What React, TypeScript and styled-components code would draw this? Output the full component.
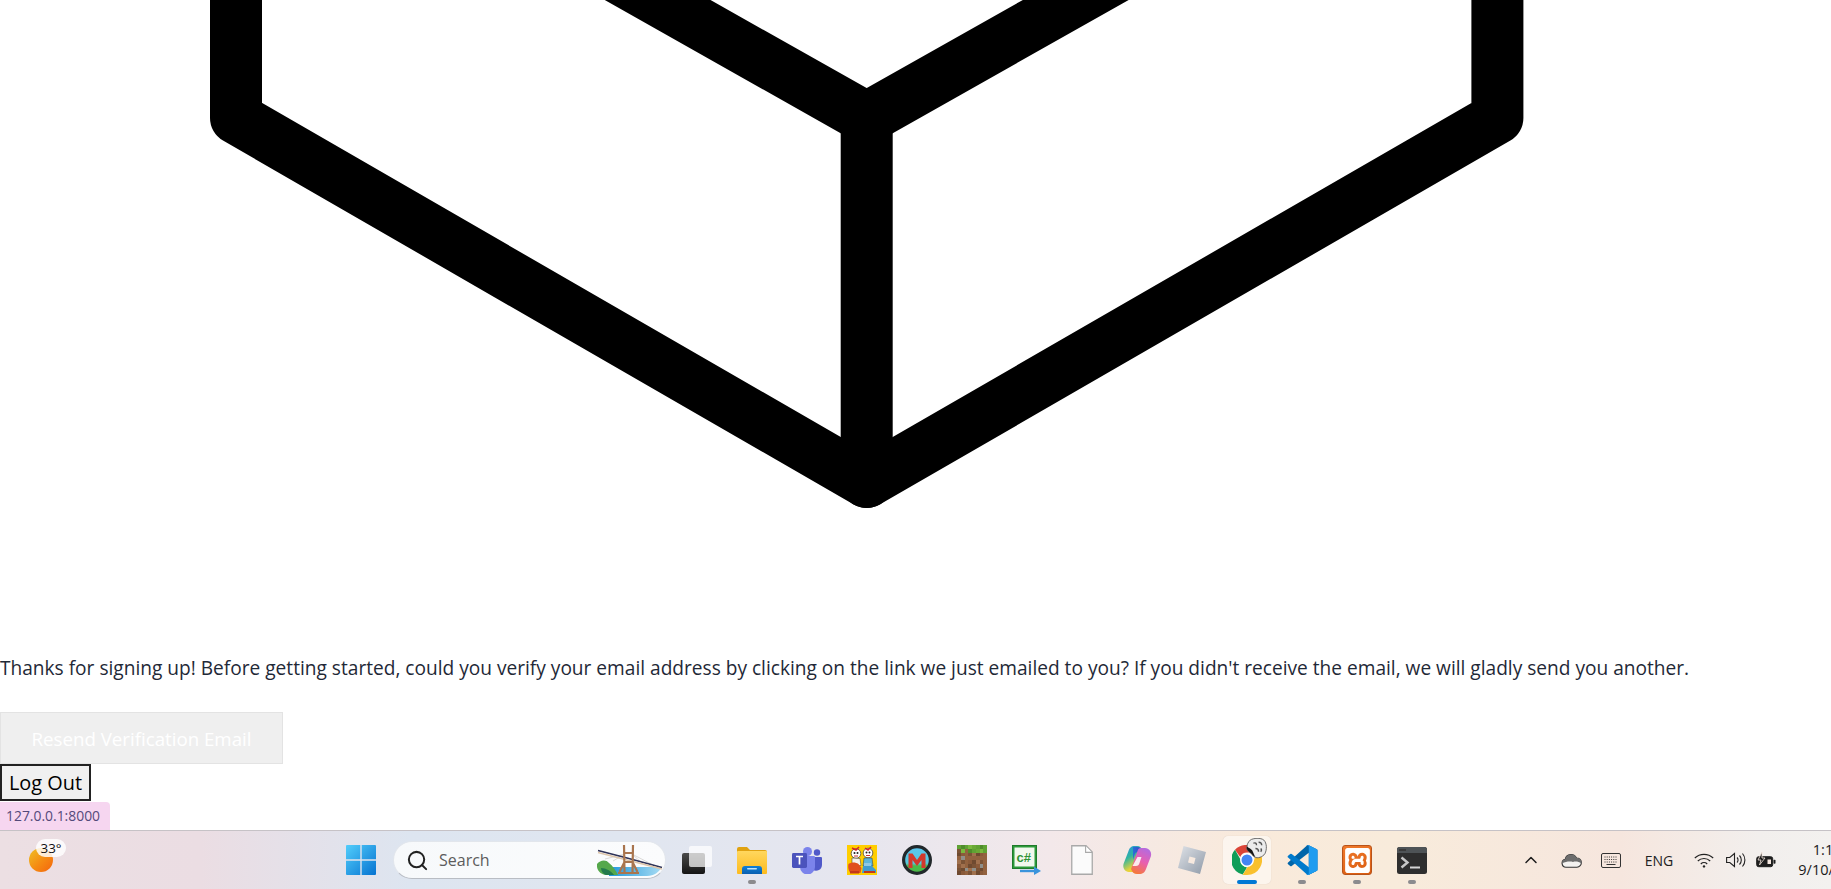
import React from "react";
import styled, { createGlobalStyle } from "styled-components";
import { Search, ChevronUp } from "lucide-react";
import { SiXampp } from "react-icons/si";

const UI = `"Open Sans", "Noto Sans", "Liberation Sans", sans-serif`;

const Global = createGlobalStyle`
  html, body { margin: 0; padding: 0; background: #fff; overflow: hidden; }
  * { box-sizing: border-box; }
`;

const Page = styled.div`
  width: 1831px; height: 889px; display: flex; flex-direction: column; overflow: hidden; font-family: ${UI};
`;
const CubeArt = styled.svg`display: block; width: 1831px; height: 648px; flex: none;`;
const Message = styled.p`
  margin: 0 0 24px; height: 40px; line-height: 40px; font-size: 19.12px; color: #1f2937; white-space: nowrap;
`;
const Actions = styled.div`display: flex; flex-direction: column; align-items: flex-start;`;
const ResendButton = styled.button`
  width: 283px; height: 52px; padding: 0; background: #efefef; border: 1px solid #e3e3e3; color: #fff;
  font: 18.7px ${UI};
`;
const LogoutButton = styled.button`
  width: 91px; height: 37px; padding: 0; background: #f0f0f0; border: 2.5px solid #222; color: #000;
  font: 19.9px ${UI}; border-radius: 0;
`;
const StatusBubble = styled.div`
  align-self: flex-start; margin-top: 1px; width: 110px; height: 28px; padding-left: 6px; line-height: 28px;
  background: #f6d6f0; border-top-right-radius: 4px; color: #54497a; font-size: 13.9px; white-space: nowrap;
`;
const Taskbar = styled.div`
  flex: none; height: 59px; display: flex; align-items: center; border-top: 1px solid #c6c2c6;
  background: linear-gradient(90deg, #ecdfe3 0, #ebdde3 200px, #dde5f0 410px, #e0e6f0 620px, #e6e6ef 850px,
    #f3e8ea 1050px, #f9eadb 1250px, #f8ebdb 1400px, #f6e6de 1620px, #f2efed 1760px, #f3f1ef 1831px);
`;
const LeftZone = styled.div`flex: none; width: 333px; padding-left: 29px; display: flex; align-items: center;`;
const Weather = styled.div`
  position: relative; width: 24px; height: 24px; border-radius: 50%; margin-top: 0;
  background: linear-gradient(135deg, #efc125 0%, #f58a12 55%, #f4640e 100%);
`;
const WeatherBadge = styled.span`
  position: absolute; left: 7px; top: -9px; width: 30px; height: 18px; border-radius: 9px; text-align: center;
  background: rgba(255,255,255,.82); font-size: 13.4px; line-height: 18px; color: #111;
`;
const Slot = styled.div`
  position: relative; flex: none; width: 55px; height: 58px; display: flex; align-items: center; justify-content: center;
`;
const ActiveHighlight = styled.div`
  width: 48px; height: 48px; border-radius: 5px; display: flex; align-items: center; justify-content: center;
  background: rgba(255,255,255,.5); box-shadow: 0 0 1px rgba(0,0,0,.16);
`;
const Dot = styled.i<{ $active?: boolean }>`
  position: absolute; top: 49px; left: 50%; transform: translateX(-50%); height: 4px; border-radius: 2px;
  width: ${p => (p.$active ? 20 : 8)}px; background: ${p => (p.$active ? "#0078d4" : "#8b8b8e")};
`;
const SearchBox = styled.div`
  flex: none; width: 273px; height: 38px; margin: 0 3.5px 0 5px; border-radius: 19px; overflow: hidden;
  display: flex; align-items: center; padding-left: 12px; color: #222;
  background: linear-gradient(90deg, #f7f9fb, #fbfcfd); border: 1px solid #e2e6ec; border-bottom-color: #b9bdc4;
`;
const SearchLabel = styled.span`margin-left: 10px; font-size: 16px; color: #5c5c5c;`;
const BridgeWrap = styled.div`margin-left: auto; display: flex; margin-right: 2px;`;
const Tray = styled.div`flex: none; margin-left: 71.5px; display: flex; align-items: center; height: 58px; color: #1c1c1c;`;
const TrayItem = styled.div<{ $w: number }>`
  flex: none; width: ${p => p.$w}px; display: flex; align-items: center; justify-content: center;
`;
const LangLabel = styled.span`font-size: 14px; color: #222;`;
const Clock = styled.div`
  flex: none; width: 86px; text-align: right; font-size: 14.5px; line-height: 20px; color: #1a1a1a; white-space: nowrap;
`;
const CursorBadge = styled.svg`position: absolute; left: 23px; top: 2px;`;
const ChromeWrap = styled.div`position: relative; width: 48px; height: 48px; display: flex; align-items: center; justify-content: center;`;
const XamppTile = styled.div`
  width: 30px; height: 30px; border-radius: 3px; display: flex; align-items: center; justify-content: center; color: #fff;
  background: linear-gradient(160deg, #f07a2c, #d95c10); border: 1.5px solid #b9531a;
`;

const WindowsLogo = () => (
  <svg width="30" height="30" viewBox="0 0 30 30">
    <defs>
      <linearGradient id="win" x1="0" y1="0" x2="1" y2="1">
        <stop offset="0" stopColor="#52cdfb" /><stop offset="1" stopColor="#0673d1" />
      </linearGradient>
    </defs>
    <path fill="url(#win)" d="M1 0h13.3v14.3H0V1a1 1 0 0 1 1-1zM15.7 0H29a1 1 0 0 1 1 1v13.3H15.7zM0 15.7h14.3V30H1a1 1 0 0 1-1-1zM15.7 15.7H30V29a1 1 0 0 1-1 1H15.7z" />
  </svg>
);

const Bridge = () => (
  <svg width="66" height="32" viewBox="0 0 66 32">
    <defs>
      <linearGradient id="wat" x1="0" y1="0" x2="1" y2="0">
        <stop offset="0" stopColor="#1f97dc" /><stop offset="1" stopColor="#a8dcf3" />
      </linearGradient>
    </defs>
    <path d="M12 23H65C62 28 57 32 50 32H12z" fill="url(#wat)" />
    <path d="M28 10L8 15M28 10L16 17M35 10L46 20M35 10L58 22" stroke="#cfcbc8" strokeWidth=".7" />
    <path d="M1 6.500L30 14 65 23.500" stroke="#2f3358" strokeWidth="1.800" fill="none" />
    <path d="M1 8.500L30 16 65 25" stroke="#ddc5aa" strokeWidth="1.600" fill="none" />
    <path d="M27 1l.5 27M36 1l-.5 27M27 9h9M27.500 18l-5 10M35.500 18l5 10M27 18h9" stroke="#a9754e" strokeWidth="2.200" fill="none" />
    <path d="M21 29h21" stroke="#a9754e" strokeWidth="1.800" />
    <path d="M0 20c3-4 9-5 12-1 4 3 7 8 9 12H9C4 31-1 26 0 20z" fill="#55a84c" />
    <path d="M4 24c5 0 10 3 13 7H9c-3-1-5-4-5-7z" fill="#237a4c" />
  </svg>
);

const TaskView = () => (
  <svg width="30" height="28" viewBox="0 0 30 28">
    <defs>
      <linearGradient id="tvd" x1="0" y1="0" x2="0" y2="1">
        <stop offset="0" stopColor="#4a4a4a" /><stop offset="1" stopColor="#141414" />
      </linearGradient>
    </defs>
    <rect x="0" y="7" width="23" height="21" rx="2" fill="url(#tvd)" />
    <rect x="7" y="0" width="23" height="21" rx="2" fill="#fff" fillOpacity=".72" />
  </svg>
);

const Explorer = () => (
  <svg width="30" height="27" viewBox="0 0 30 27">
    <defs>
      <linearGradient id="fld" x1="0" y1="0" x2="0" y2="1">
        <stop offset="0" stopColor="#ffd75e" /><stop offset="1" stopColor="#fdbb1e" />
      </linearGradient>
      <linearGradient id="fb" x1="0" y1="0" x2="0" y2="1">
        <stop offset="0" stopColor="#0f80d7" /><stop offset="1" stopColor="#0a5fb0" />
      </linearGradient>
    </defs>
    <path d="M0 2a2 2 0 0 1 2-2h8l3 3h15a2 2 0 0 1 2 2v4H0z" fill="#e0a210" />
    <rect y="4" width="30" height="23" rx="1" fill="url(#fld)" />
    <path d="M5 27v-5a3 3 0 0 1 3-3h14a3 3 0 0 1 3 3v5z" fill="url(#fb)" />
    <rect x="10" y="21" width="10" height="1.6" rx=".8" fill="#bfe3fb" />
  </svg>
);

const Teams = () => (
  <svg width="30" height="27" viewBox="0 0 30 27">
    <circle cx="25" cy="5.5" r="3.2" fill="#5059c9" />
    <path d="M20 10h9a1 1 0 0 1 1 1v7a6 6 0 0 1-9 5z" fill="#5059c9" />
    <circle cx="15.5" cy="4.5" r="4.5" fill="#7b83eb" />
    <path d="M8 9h14a1 1 0 0 1 1 1v10a7.5 7.5 0 0 1-15 0z" fill="#7b83eb" />
    <rect x="0" y="6" width="15" height="15" rx="1.4" fill="#4b53bc" />
    <path d="M4 9.5h7M7.5 9.5v8" stroke="#fff" strokeWidth="1.7" />
  </svg>
);

const Cuphead = () => (
  <svg width="30" height="30" viewBox="0 0 30 30">
    <rect width="30" height="30" fill="#ffce00" />
    <circle cx="9" cy="8.500" r="4.800" fill="#fff" stroke="#333" strokeWidth=".7" />
    <circle cx="21" cy="8" r="4.800" fill="#fff" stroke="#333" strokeWidth=".7" />
    <path d="M5 3l4 2 3-3M18 3l3 2 3-3" stroke="#d8232a" strokeWidth="1.500" fill="none" />
    <circle cx="7.500" cy="8" r="1" fill="#222" /><circle cx="10.500" cy="8" r="1" fill="#222" />
    <circle cx="19.500" cy="7.500" r="1" fill="#222" /><circle cx="22.500" cy="7.500" r="1" fill="#222" />
    <path d="M7 11h4M19 10.500h4" stroke="#c33" strokeWidth="1.100" />
    <path d="M5 13l8 .5 1 7-9 .5z" fill="#f4f4ee" stroke="#333" strokeWidth=".5" />
    <path d="M17 13l8 0 1 8H16z" fill="#5cb6dc" stroke="#333" strokeWidth=".5" />
    <path d="M1.500 19c3-2 7-2 10 0l3 4-1 5H5c-3 0-4.500-5-3.500-9z" fill="#e0501e" />
    <path d="M16 21h9l4 4v3H15z" fill="#3f9cd0" />
    <path d="M17 18h7v3h-7z" fill="#8ec9e6" />
    <path d="M3 26h9v2.500H3zM17 26h11v2H17z" fill="#c3371a" />
  </svg>
);

const MBadge = () => (
  <svg width="30" height="30" viewBox="0 0 30 30">
    <defs>
      <linearGradient id="mb" x1="0" y1="0" x2="0" y2="1">
        <stop offset="0" stopColor="#5bc7ef" /><stop offset=".62" stopColor="#58c7dc" /><stop offset=".72" stopColor="#4cb948" />
      </linearGradient>
    </defs>
    <circle cx="15" cy="15" r="13.4" fill="url(#mb)" stroke="#22282b" strokeWidth="3.2" />
    <path d="M6.5 23V8.5h4L15 15l4.5-6.5h4V23h-4v-8L15 21l-4.5-6v8z" fill="#d2392c" />
  </svg>
);

const DIRT = ["#8a5a3a", "#6f4a30", "#a0704d", "#7b5336", "#93623f"];
const GRASS = ["#5fa233", "#79b83e", "#4f8d2b", "#6aa936"];
const STONE = new Set(["1-3", "6-5", "4-6", "2-6"]);
const cellColor = (c: number, r: number) => {
  const n = (c * 7 + r * 13 + c * r) % 5;
  if (STONE.has(`${c}-${r}`)) return "#8f8f8a";
  if (r === 0) return GRASS[n % 4];
  if (r === 1) return (c + n) % 3 === 0 ? DIRT[n] : GRASS[n % 4];
  return DIRT[n];
};
const GrassBlock = () => (
  <svg width="30" height="30" viewBox="0 0 8 8" shapeRendering="crispEdges">
    {Array.from({ length: 64 }, (_, i) => {
      const c = i % 8, r = Math.floor(i / 8);
      return <rect key={i} x={c} y={r} width="1.02" height="1.02" fill={cellColor(c, r)} />;
    })}
  </svg>
);

const CSharpFile = () => (
  <svg width="30" height="30" viewBox="0 0 30 30">
    <rect x=".5" y=".5" width="24" height="23" fill="#2c9a3a" stroke="#1f7a2a" />
    <rect x="2.5" y="2.5" width="20" height="19" fill="#f2f8ee" />
    <text x="4.500" y="17" fontFamily="'Liberation Sans', sans-serif" fontSize="13" fontWeight="700" fill="#2e9336">c#</text>
    <path d="M8 26h16" stroke="#3a94dc" strokeWidth="2.400" />
    <path d="M22 21.500l7 4.500-7 4z" fill="#3a94dc" />
  </svg>
);

const BlankFile = () => (
  <svg width="22" height="30" viewBox="0 0 22 30">
    <path d="M.75.75H15L21.25 7v22.25H.75z" fill="#fbfbfb" stroke="#a9a9a9" strokeWidth="1.3" />
    <path d="M14.6 1v6.4h6.4" fill="#fff" stroke="#a9a9a9" strokeWidth="1.1" />
  </svg>
);

const Copilot = () => (
  <svg width="30" height="30" viewBox="0 0 30 30">
    <defs>
      <linearGradient id="cpa" x1="0" y1="0" x2="0.5" y2="1">
        <stop offset="0" stopColor="#2b8fe8" /><stop offset=".45" stopColor="#2fb4a0" /><stop offset=".85" stopColor="#e8d23a" />
      </linearGradient>
      <linearGradient id="cpb" x1="0.7" y1="0" x2="0.3" y2="1">
        <stop offset="0" stopColor="#b36be0" /><stop offset=".5" stopColor="#e85fb0" /><stop offset="1" stopColor="#f5793a" />
      </linearGradient>
      <linearGradient id="cpc" x1="0" y1="0" x2="1" y2="0">
        <stop offset="0" stopColor="#2b6fd8" /><stop offset="1" stopColor="#3a3fc0" />
      </linearGradient>
    </defs>
    <path d="M21 6c-1-3-3-5-6-5h-2C9 1 7.500 3 6.500 6L1.500 19C.5 23 3 27 7 27h4c2 0 3-1 3.500-3z" fill="url(#cpa)" />
    <path d="M11 2h4c3 0 5 2 6 5h-5c-2 0-3 1-3.500 3L11 15z" fill="url(#cpc)" />
    <path d="M9 24c1 3 3 5 6 5h2c4 0 6-2 7-5l5-13c1-4-2-8-6-8h-4c-2 0-3 1-3.500 3z" fill="url(#cpb)" />
    <path d="M15.500 12h4l-2 6c-.5 2-1.500 3-3.500 3h-3.500z" fill="#fff" fillOpacity=".85" />
  </svg>
);

const Roblox = () => (
  <svg width="30" height="30" viewBox="0 0 30 30">
    <defs>
      <linearGradient id="rb" x1="0" y1="0" x2="1" y2="1">
        <stop offset="0" stopColor="#dfe2e7" /><stop offset="1" stopColor="#8f9aa8" />
      </linearGradient>
    </defs>
    <path fillRule="evenodd" fill="url(#rb)" d="M6.500 1L29 7l-6 22L1 23zM12.500 11.500l-1.500 6 6 1.500 1.500-6z" />
  </svg>
);

const Chrome = () => (
  <svg width="30" height="30" viewBox="0 0 30 30">
    <path d="M15 0a15 15 0 0 1 13 7.500H15a7.500 7.500 0 0 0-6.800 4.400L3 4.800A15 15 0 0 1 15 0z" fill="#db4437" />
    <path d="M3 4.800l5.500 9.700A7.500 7.500 0 0 0 15 22.500l-4.300 7A15 15 0 0 1 3 4.800z" fill="#0f9d58" />
    <path d="M28 7.500A15 15 0 0 1 15 30h-4.300l6.300-10.500A7.500 7.500 0 0 0 21 7.500z" fill="#f9c02d" />
    <circle cx="15" cy="15" r="6.200" fill="#4285f4" stroke="#fff" strokeWidth="1.400" />
  </svg>
);

const CursorBlob = () => (
  <CursorBadge width="21" height="21" viewBox="0 0 20 20">
    <path d="M4 2c3-2 10-2.500 13 0 3 3 3 9 1 13-2 3-7 5-10 3-2-1-2-3-4-4-3-2-4-4-3-6 0-2 1-4 3-6z" fill="#ececec" stroke="#555" strokeWidth=".8" />
    <path d="M1 8c2 2 4 2 5 4s2 5 3 6c-3-1-3-3-5-4-2-2-4-3-3-6z" fill="#141414" />
    <path d="M7 5c2-1 3 0 3 2M12 4c2 0 3 1 3 3M9 10c2 0 3 1 3 3M14 10c1 1 1 2 0 3" stroke="#555" strokeWidth="1.300" fill="none" />
  </CursorBadge>
);

const VSCode = () => (
  <svg width="31" height="30" viewBox="0 0 100 100">
    <path d="M71 99l25-12a6 6 0 0 0 4-6V19a6 6 0 0 0-4-6L71 1a6 6 0 0 0-8 2L2 58a4 4 0 0 0 0 6l7 6a4 4 0 0 0 5 0l57-44z" fill="#0065a9" />
    <path d="M71 74L14 30a4 4 0 0 0-5 0l-7 6a4 4 0 0 0 0 6l61 55a6 6 0 0 0 8 2l25-12a6 6 0 0 0 4-6v-1a4 4 0 0 1-7 3z" fill="#007acc" />
    <path d="M71 99a6 6 0 0 1-8-2c3 3 8 1 8-3V6c0-4-5-6-8-3a6 6 0 0 1 8-2l25 12a6 6 0 0 1 4 6v62a6 6 0 0 1-4 6z" fill="#1f9cf0" />
  </svg>
);

const TerminalIcon = () => (
  <svg width="30" height="27" viewBox="0 0 30 27">
    <rect width="30" height="27" rx="2.500" fill="#2e2e2e" />
    <path d="M0 6V2.500A2.500 2.500 0 0 1 2.500 0h25A2.500 2.500 0 0 1 30 2.500V6z" fill="#4e5356" />
    <rect x="2" y="2" width="7" height="2" fill="#3a3a3a" />
    <path d="M4.500 10.500l6 5-6 5" stroke="#c7c7c7" strokeWidth="2.400" fill="none" />
    <rect x="13" y="19.500" width="10" height="2" fill="#d6d6d6" />
  </svg>
);

const CloudIcon = () => (
  <svg width="21" height="15" viewBox="0 0 21 15">
    <path d="M5 14.200a4 4 0 0 1-.8-7.900A6 6 0 0 1 15.500 5a4.600 4.600 0 0 1 .5 9.200z" fill="#f4f2f0" stroke="#333" strokeWidth="1.100" />
    <path d="M1 10.500a4 4 0 0 1 3.200-4.200A6 6 0 0 1 15.500 5a4.600 4.600 0 0 1 5 5.500c-3-2-6-2.500-8.500-1.500-3-1-7-.5-11 1.500z" fill="#6d6d6d" />
  </svg>
);

const KeyboardIcon = () => (
  <svg width="20" height="15" viewBox="0 0 20 15" fill="none" stroke="#333">
    <rect x=".5" y=".5" width="19" height="14" rx="1.500" />
    <path d="M3.500 4h13M3.500 6.500h13" strokeDasharray="1 1.200" />
    <path d="M3.500 9h13" strokeDasharray="1 1.200" />
    <path d="M5.500 11.500h9" />
  </svg>
);

const WifiIcon = () => (
  <svg width="20" height="15" viewBox="0 0 20 15" fill="none" stroke="#222" strokeWidth="1.200">
    <path d="M.8 5A13.500 13.500 0 0 1 19.200 5M3.800 8a9 9 0 0 1 12.400 0M6.800 11a4.600 4.600 0 0 1 6.400 0" />
    <circle cx="10" cy="13.400" r="1.200" fill="#222" stroke="none" />
  </svg>
);

const SpeakerIcon = () => (
  <svg width="21" height="16" viewBox="0 0 21 16" fill="none" stroke="#222" strokeWidth="1.100">
    <path d="M.6 5.500h3.200L8.500 1.500v13l-4.700-4H.6z" />
    <path d="M11 5.500a3.500 3.500 0 0 1 0 5M13.500 3.500a6.500 6.500 0 0 1 0 9M16.500 1.500a10 10 0 0 1 0 13" />
  </svg>
);

const BatteryIcon = () => (
  <svg width="20" height="17" viewBox="0 0 20 17">
    <rect x=".7" y="4.700" width="16" height="10" rx="2" fill="#1e1e1e" stroke="#1e1e1e" />
    <rect x="17.500" y="7.800" width="2" height="4" rx=".8" fill="#1e1e1e" />
    <path d="M6 0L2 8h3l-1.500 5L9 6H6z" fill="#1e1e1e" stroke="#f6e8e0" strokeWidth=".8" />
    <rect x="11.500" y="7.500" width="3.500" height="4.500" fill="#f5e8e0" />
  </svg>
);

const DOCK: { key: string; node: React.ReactNode; dot?: boolean }[] = [
  { key: "taskview", node: <TaskView /> },
  { key: "explorer", node: <Explorer />, dot: true },
  { key: "teams", node: <Teams /> },
  { key: "cuphead", node: <Cuphead /> },
  { key: "m", node: <MBadge /> },
  { key: "minecraft", node: <GrassBlock /> },
  { key: "csharp", node: <CSharpFile /> },
  { key: "file", node: <BlankFile /> },
  { key: "copilot", node: <Copilot /> },
  { key: "roblox", node: <Roblox /> },
];

const DOCK_END: { key: string; node: React.ReactNode }[] = [
  { key: "vscode", node: <VSCode /> },
  { key: "xampp", node: <XamppTile><SiXampp size={25} /></XamppTile> },
  { key: "terminal", node: <TerminalIcon /> },
];

export default function App() {
  return (
    <Page>
      <Global />
      <CubeArt viewBox="0 0 1831 648" aria-hidden="true">
        <g fill="none" stroke="#000" strokeWidth="52" strokeLinejoin="round" strokeLinecap="round">
          <path d="M236 -300V118L866.700 482 1497.400 118V-300" />
          <path d="M236 -238L866.700 118 1497.400 -238" />
          <path d="M866.700 118V482" />
        </g>
      </CubeArt>
      <Message>
        Thanks for signing up! Before getting started, could you verify your email address by clicking on the link we just emailed to you? If you didn't receive the email, we will gladly send you another.
      </Message>
      <Actions>
        <ResendButton>Resend Verification Email</ResendButton>
        <LogoutButton>Log Out</LogoutButton>
      </Actions>
      <StatusBubble>127.0.0.1:8000</StatusBubble>
      <Taskbar>
        <LeftZone>
          <Weather><WeatherBadge>33°</WeatherBadge></Weather>
        </LeftZone>
        <Slot><WindowsLogo /></Slot>
        <SearchBox>
          <Search size={23} strokeWidth={2.1} />
          <SearchLabel>Search</SearchLabel>
          <BridgeWrap><Bridge /></BridgeWrap>
        </SearchBox>
        {DOCK.map(d => (
          <Slot key={d.key}>{d.node}{d.dot && <Dot />}</Slot>
        ))}
        <Slot>
          <ActiveHighlight>
            <ChromeWrap><Chrome /><CursorBlob /></ChromeWrap>
          </ActiveHighlight>
          <Dot $active />
        </Slot>
        {DOCK_END.map(d => (
          <Slot key={d.key}>{d.node}<Dot /></Slot>
        ))}
        <Tray>
          <TrayItem $w={40}><ChevronUp size={20} strokeWidth={1.8} /></TrayItem>
          <TrayItem $w={40}><CloudIcon /></TrayItem>
          <TrayItem $w={40}><KeyboardIcon /></TrayItem>
          <TrayItem $w={56}><LangLabel>ENG</LangLabel></TrayItem>
          <TrayItem $w={34}><WifiIcon /></TrayItem>
          <TrayItem $w={30}><SpeakerIcon /></TrayItem>
          <TrayItem $w={30}><BatteryIcon /></TrayItem>
          <Clock>1:11 PM<br />9/10/2025</Clock>
        </Tray>
      </Taskbar>
    </Page>
  );
}
